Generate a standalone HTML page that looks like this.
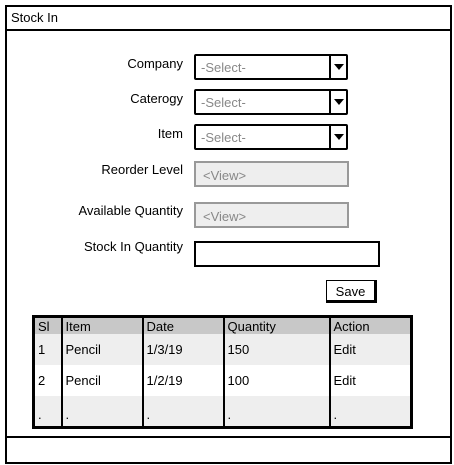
<!DOCTYPE html>
<html><head><meta charset="utf-8"><style>
*{margin:0;padding:0;box-sizing:border-box}
body{width:454px;height:465px;background:#fff;position:relative;overflow:hidden;font-family:"Liberation Sans",sans-serif;font-size:12px;color:#000}
.a{position:absolute}
.lbl{position:absolute;right:271px;text-align:right;white-space:nowrap;font-size:13px}
.sel{position:absolute;left:194px;width:154px;height:26px;border:2px solid #000;border-radius:2px;background:#fff;color:#888;font-size:13px;padding:4px 0 0 5px}
.sel i{position:absolute;right:0;top:0;width:17px;height:100%;border-left:2px solid #000}
.sel i:after{content:"";position:absolute;left:3px;top:8px;border-left:5px solid transparent;border-right:5px solid transparent;border-top:6px solid #000}
.view{position:absolute;left:194px;width:155px;height:26px;border:2px solid #999;background:#eee;color:#888;font-size:13px;padding:5px 0 0 7px}
table{position:absolute;left:32px;top:315px;width:381px;border-collapse:collapse;border:3px solid #000;font-size:13px}
td{border-left:2px solid #000;padding:0 3px;vertical-align:top}
tr.h td{background:#c8c8c8;height:17px;padding-top:1px}
tr.r1 td{background:#eee;height:31px;padding-top:8px}
tr.r2 td{background:#fff;height:31px;padding-top:8px}
tr.r3 td{background:#eee;height:31px;padding-top:11px}
</style></head><body>
<div class="a" style="left:5px;top:5px;width:447px;height:459px;border:2px solid #000"></div>
<div class="a" style="left:5px;top:29px;width:447px;height:2px;background:#000"></div>
<div class="a" style="left:11px;top:10px;font-size:13px">Stock In</div>
<div class="a" style="left:5px;top:436px;width:447px;height:2px;background:#000"></div>

<div class="lbl" style="top:56px">Company</div>
<div class="lbl" style="top:91px">Caterogy</div>
<div class="lbl" style="top:126px">Item</div>
<div class="lbl" style="top:162px">Reorder Level</div>
<div class="lbl" style="top:203px">Available Quantity</div>
<div class="lbl" style="top:239px">Stock In Quantity</div>

<div class="sel" style="top:54px">-Select-<i></i></div>
<div class="sel" style="top:89px">-Select-<i></i></div>
<div class="sel" style="top:124px">-Select-<i></i></div>
<div class="view" style="top:161px">&lt;View&gt;</div>
<div class="view" style="top:202px">&lt;View&gt;</div>
<div class="a" style="left:194px;top:241px;width:186px;height:26px;border:2px solid #000"></div>
<div class="a" style="left:326px;top:280px;width:51px;height:23px;border:1px solid #000;border-right:3px solid #000;border-bottom:3px solid #000;text-align:center;padding-top:3px;font-size:13px">Save</div>

<table>
<colgroup><col style="width:28px"><col style="width:81px"><col style="width:81px"><col style="width:106px"><col></colgroup>
<tr class="h"><td style="border-left:0">Sl</td><td>Item</td><td>Date</td><td>Quantity</td><td>Action</td></tr>
<tr class="r1"><td style="border-left:0">1</td><td>Pencil</td><td>1/3/19</td><td>150</td><td>Edit</td></tr>
<tr class="r2"><td style="border-left:0">2</td><td>Pencil</td><td>1/2/19</td><td>100</td><td>Edit</td></tr>
<tr class="r3"><td style="border-left:0">.</td><td>.</td><td>.</td><td>.</td><td>.</td></tr>
</table>
</body></html>
